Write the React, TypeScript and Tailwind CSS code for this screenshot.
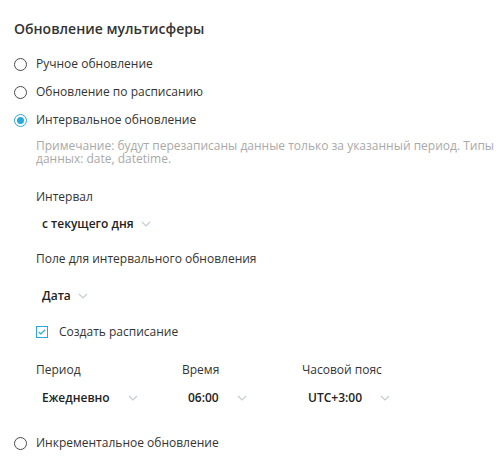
import { useState } from 'react';

const Chevron = () => (
  <svg width="10" height="6" viewBox="0 0 10 6" fill="none" className="shrink-0">
    <path d="M1 1l4 4 4-4" stroke="#c4cbd4" strokeWidth="1.2" />
  </svg>
);

function Radio({ checked, label }: { checked?: boolean; label: string }) {
  return (
    <label className="flex items-center h-[28px] cursor-pointer">
      <span
        className={
          'w-[13px] h-[13px] rounded-full border flex items-center justify-center mr-[9px] ' +
          (checked ? 'border-[#29a8e0]' : 'border-[#4a4a4a]')
        }
      >
        {checked && <span className="w-[7px] h-[7px] rounded-full bg-[#29a8e0]" />}
      </span>
      <span className="text-[12px] text-[#333]">{label}</span>
    </label>
  );
}

function Select({ value, gap }: { value: string; gap: string }) {
  return (
    <div className={'flex items-center pl-[6px] h-[28px] ' + gap}>
      <span className="text-[12px] font-semibold text-[#222]">{value}</span>
      <Chevron />
    </div>
  );
}

export default function App() {
  const [mode] = useState('interval');

  return (
    <div className="w-[503px] h-[459px] bg-white font-['Open_Sans',sans-serif] pl-[14px] pt-[18px]">
      <h2 className="text-[14px] font-semibold text-[#333] leading-[22px]">Обновление мультисферы</h2>
      <div className="mt-[10px]">
        <Radio label="Ручное обновление" checked={mode === 'manual'} />
        <Radio label="Обновление по расписанию" checked={mode === 'schedule'} />
        <Radio label="Интервальное обновление" checked={mode === 'interval'} />
      </div>

      <div className="pl-[22px]">
        <p className="text-[12px] leading-[13px] text-[#a9a9a9] mt-[5px] pr-[6px]">
          Примечание: будут перезаписаны данные только за указанный период. Типы данных: date, datetime.
        </p>

        <div className="mt-[23px] text-[12px] text-[#333] leading-[18px]">Интервал</div>
        <div className="mt-[4px]">
          <Select value="с текущего дня" gap="gap-[7px]" />
        </div>

        <div className="mt-[12px] text-[12px] text-[#333] leading-[18px]">Поле для интервального обновления</div>
        <div className="mt-[14px]">
          <Select value="Дата" gap="gap-[7px]" />
        </div>

        <label className="flex items-center mt-[12px] h-[20px]">
          <span className="w-[12px] h-[12px] border border-[#29a8e0] flex items-center justify-center mr-[11px]">
            <svg width="8" height="6" viewBox="0 0 8 6" fill="none">
              <path d="M0.8 3l2 2L7.2 0.8" stroke="#29a8e0" strokeWidth="1.2" />
            </svg>
          </span>
          <span className="text-[12px] text-[#333]">Создать расписание</span>
        </label>

        <div className="mt-[19px] flex">
          <div className="w-[146px]">
            <div className="text-[12px] text-[#333] leading-[18px]">Период</div>
            <div className="mt-[5px]">
              <Select value="Ежедневно" gap="gap-[18px]" />
            </div>
          </div>
          <div className="w-[120px]">
            <div className="text-[12px] text-[#333] leading-[18px]">Время</div>
            <div className="mt-[5px]">
              <Select value="06:00" gap="gap-[18px]" />
            </div>
          </div>
          <div>
            <div className="text-[12px] text-[#333] leading-[18px]">Часовой пояс</div>
            <div className="mt-[5px]">
              <Select value="UTC+3:00" gap="gap-[18px]" />
            </div>
          </div>
        </div>
      </div>

      <div className="mt-[17px]">
        <Radio label="Инкрементальное обновление" checked={mode === 'incremental'} />
      </div>
    </div>
  );
}
